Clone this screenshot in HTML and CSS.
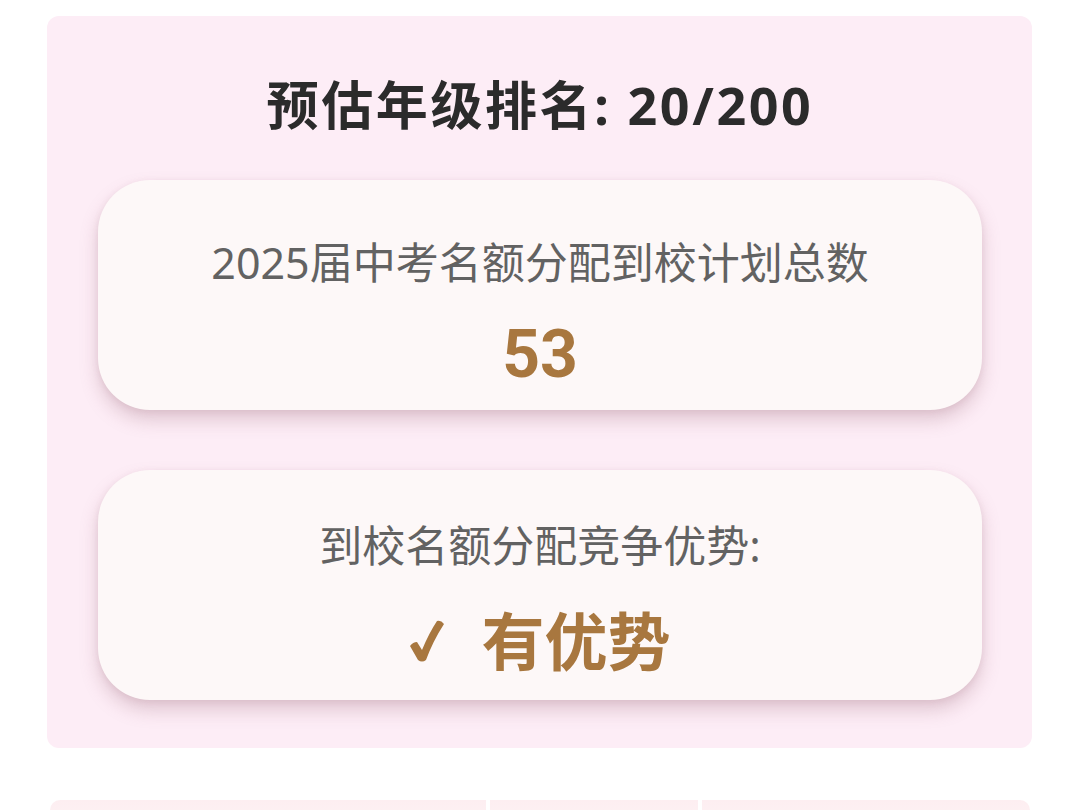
FILE: index.html
```html
<!DOCTYPE html>
<html lang="zh-CN">
<head>
  <meta charset="UTF-8">
  <title>名额分配</title>
  <link rel="stylesheet" href="styles.css">
</head>
<body>

  <div class="panel">
    <h2 class="rank-title">预估年级排名: 20/200</h2>

    <div class="stat-card stat-card--plan">
      <div class="stat-label">2025届中考名额分配到校计划总数</div>
      <div class="stat-value">53</div>
    </div>

    <div class="stat-card stat-card--edge">
      <div class="stat-label">到校名额分配竞争优势:</div>
      <div class="stat-value stat-value--big">
        <svg class="tick" width="34" height="44" viewBox="0 0 34 44">
          <path d="M0 27 Q3 23 7 23 L12 31 Q19 14 27 2 Q31 1 34 5 Q23 22 16 41 Q12 44 8 41 Z" fill="currentColor"/>
        </svg>
        <span>有优势</span>
      </div>
    </div>
  </div>

  <div class="next-row">
    <div class="next-cell next-cell--wide"></div>
    <div class="next-cell"></div>
    <div class="next-cell next-cell--end"></div>
  </div>

</body>
</html>
```

FILE: styles.css
```css
:root {
  --panel-bg: #fdedf6;
  --card-bg: #fdf8f8;
  --gold: #a8773f;
  --ink: #2b2b2b;
  --muted: #626262;
}

* {
  margin: 0;
  padding: 0;
  box-sizing: border-box;
}

body {
  font-family: "Noto Sans", "Noto Sans CJK SC", sans-serif;
  background: #ffffff;
  color: var(--ink);
  width: 1080px;
  overflow: hidden;
}

.panel {
  margin: 16px 48px 0 47px;
  padding: 54px 50px 48px 51px;
  background: var(--panel-bg);
  border-radius: 12px;
  display: flex;
  flex-direction: column;
  gap: 60px;
}

.rank-title {
  font-size: 52px;
  font-weight: 700;
  line-height: 70px;
  letter-spacing: 2.6px;
  text-align: center;
  color: var(--ink);
  margin-bottom: -20px;
}

.stat-card {
  height: 230px;
  background: var(--card-bg);
  border-radius: 52px;
  box-shadow: 0 10px 18px rgba(160, 110, 125, 0.3), 0 2px 6px rgba(160, 110, 125, 0.12);
  display: flex;
  flex-direction: column;
  align-items: center;
}

.stat-card--plan {
  padding-top: 55px;
  gap: 24px;
}

.stat-card--edge {
  padding-top: 48px;
  gap: 22px;
}

.stat-label {
  font-size: 43px;
  line-height: 56px;
  color: var(--muted);
}

.stat-value {
  font-family: "Roboto", "Noto Sans CJK SC", sans-serif;
  font-size: 66px;
  font-weight: 700;
  line-height: 80px;
  color: var(--gold);
}

.stat-value--big {
  font-family: "Noto Sans CJK SC", sans-serif;
  font-size: 63px;
  line-height: 84px;
  display: flex;
  align-items: center;
  gap: 38px;
}

.tick {
  display: block;
  margin-top: 6px;
}

.next-row {
  margin: 52px 50px 0 50px;
  display: grid;
  grid-template-columns: 436px 208px 1fr;
  gap: 4px;
}

.next-cell {
  height: 40px;
  background: linear-gradient(to bottom, #fdeef1, #fdf5f6);
}

.next-cell--wide {
  border-top-left-radius: 10px;
}

.next-cell--end {
  border-top-right-radius: 10px;
}
```
